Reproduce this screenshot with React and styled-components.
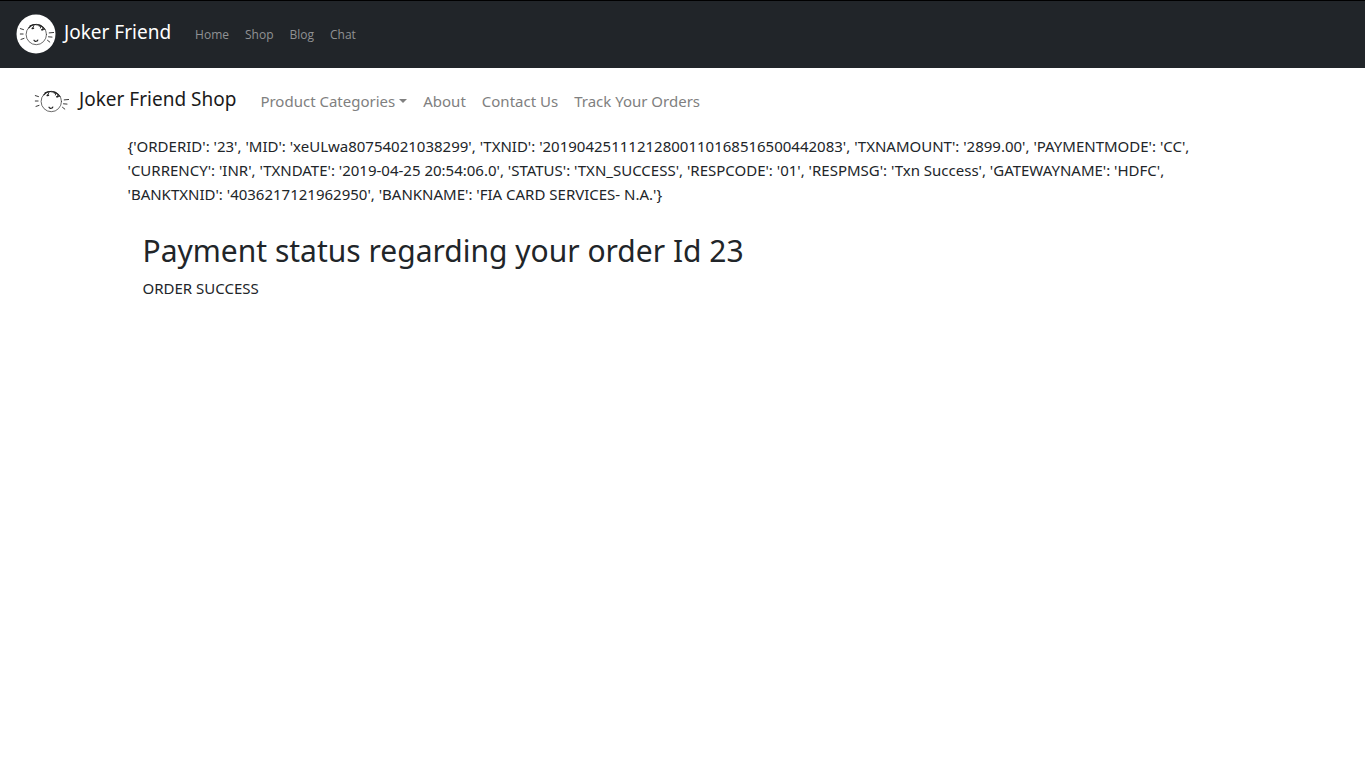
import React from 'react';
import styled, { createGlobalStyle } from 'styled-components';

const GlobalStyle = createGlobalStyle`
  *, *::before, *::after { box-sizing: border-box; }
  body {
    margin: 0;
    background: #fff;
    color: #212529;
    font-family: "Segoe UI", "Noto Sans", sans-serif;
    font-size: 15px;
    line-height: 24px;
  }
`;

const SiteBar = styled.header`
  display: flex;
  align-items: center;
  gap: 16px;
  padding: 13px 16px 14px;
  background: #212529;
  border-top: 1px solid #000;
`;

const ShopBar = styled.header`
  display: flex;
  align-items: center;
  gap: 16px;
  padding: 13px 31px;
`;

const Brand = styled.a`
  display: flex;
  align-items: center;
  gap: 8px;
  color: ${(p) => (p.$light ? '#fff' : '#1a1a1a')};
  font-size: 19px;
  line-height: 30px;
  text-decoration: none;
  white-space: nowrap;
`;

const BrandName = styled.span`
  padding-bottom: 4px;
`;

const Logo = styled.svg`
  flex: none;
  width: 40px;
  height: 40px;
`;

const Nav = styled.nav`
  display: flex;
  align-items: center;
`;

const NavLink = styled.a`
  padding: 8px;
  color: #808080;
  text-decoration: none;
  white-space: nowrap;
`;

const SiteLink = styled(NavLink)`
  padding: 8px 8px 6px;
  color: #909294;
  font-family: "Segoe UI", "Open Sans", sans-serif;
  font-size: 12px;
`;

const MenuButton = styled.button`
  display: flex;
  align-items: center;
  gap: 4px;
  padding: 8px;
  border: 0;
  background: none;
  color: #808080;
  font: inherit;
  white-space: nowrap;
  cursor: pointer;

  &::after {
    content: "";
    border-top: 4px solid;
    border-left: 4px solid transparent;
    border-right: 4px solid transparent;
  }
`;

const Container = styled.main`
  max-width: 1140px;
  margin: 0 auto;
  padding: 0 15px 24px;
`;

const Response = styled.p`
  margin: 0;
`;

const Status = styled.section`
  padding: 26px 15px;
`;

const Title = styled.h2`
  margin: 0 0 6px;
  font-size: 30px;
  font-weight: 400;
  line-height: 38px;
`;

const Result = styled.p`
  margin: 0;
`;

function JokerLogo() {
  return (
    <Logo viewBox="0 0 40 40" aria-hidden="true">
      <circle cx="20" cy="20" r="19.5" fill="#fff" />
      <g fill="none" stroke="#222" strokeLinecap="round" strokeLinejoin="round">
        <circle cx="20.3" cy="20.5" r="10.2" strokeWidth="0.8" stroke="#444" />
        <path d="M12.8 13.8 Q16 10.2 20 10.6 Q25.5 10.6 29 15.5" strokeWidth="1.1" />
        <path d="M14 11.6 L18 10.8 M17.8 12 L16.5 14 M23 12 L24.8 12.4 L24.4 14 M27 14 L26.3 16" strokeWidth="0.9" />
        <path d="M16.3 14.5 l1.2 -0.3 M25.8 15.7 l1.4 -0.3" strokeWidth="1.5" />
        <path d="M18 26.2 Q18.7 27.7 20 27.2 Q21.2 27.5 21.8 26" strokeWidth="1.2" />
        <path d="M4.3 14.6 l3.2 1 M4.3 20 h2.8 M5 25.4 l3 -1 M33.2 18.9 l4.4 -0.4 M32.5 22.8 l3.5 0.3 M31.5 26.3 l2.3 1.8" strokeWidth="0.9" />
      </g>
    </Logo>
  );
}

const payment =
  "{'ORDERID': '23', 'MID': 'xeULwa80754021038299', 'TXNID': '20190425111212800110168516500442083', 'TXNAMOUNT': '2899.00', 'PAYMENTMODE': 'CC', 'CURRENCY': 'INR', 'TXNDATE': '2019-04-25 20:54:06.0', 'STATUS': 'TXN_SUCCESS', 'RESPCODE': '01', 'RESPMSG': 'Txn Success', 'GATEWAYNAME': 'HDFC', 'BANKTXNID': '4036217121962950', 'BANKNAME': 'FIA CARD SERVICES- N.A.'}";

export default function App() {
  return (
    <>
      <GlobalStyle />
      <SiteBar>
        <Brand href="#" $light>
          <JokerLogo />
          <BrandName>Joker Friend</BrandName>
        </Brand>
        <Nav aria-label="Site">
          {['Home', 'Shop', 'Blog', 'Chat'].map((item) => (
            <SiteLink key={item} href="#">{item}</SiteLink>
          ))}
        </Nav>
      </SiteBar>
      <ShopBar>
        <Brand href="#">
          <JokerLogo />
          <BrandName>Joker Friend Shop</BrandName>
        </Brand>
        <Nav aria-label="Shop">
          <MenuButton type="button" aria-haspopup="true">Product Categories</MenuButton>
          {['About', 'Contact Us', 'Track Your Orders'].map((item) => (
            <NavLink key={item} href="#">{item}</NavLink>
          ))}
        </Nav>
      </ShopBar>
      <Container>
        <Response>{payment}</Response>
        <Status>
          <Title>Payment status regarding your order Id 23</Title>
          <Result>ORDER SUCCESS</Result>
        </Status>
      </Container>
    </>
  );
}
